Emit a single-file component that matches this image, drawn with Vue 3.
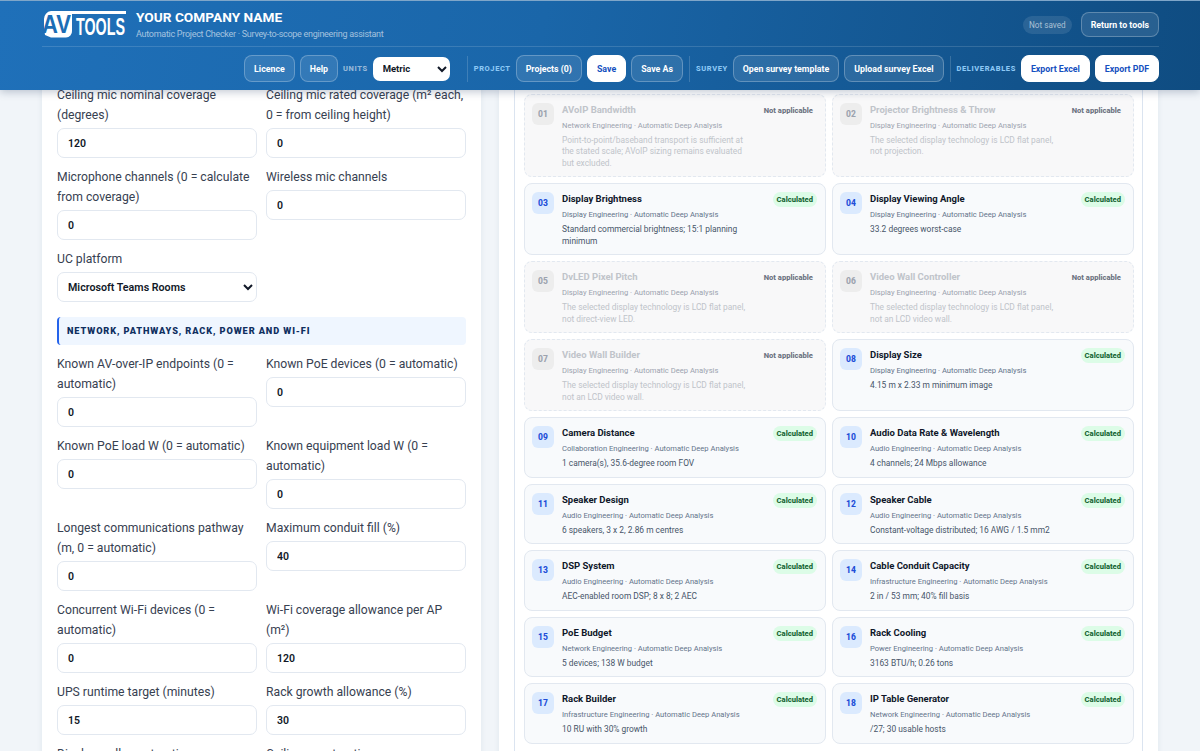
<script setup>
const rows = [
  [{ label: 'Ceiling mic nominal coverage (degrees)', value: '120' }, { label: 'Ceiling mic rated coverage (m² each, 0 = from ceiling height)', value: '0' }],
  [{ label: 'Microphone channels (0 = calculate from coverage)', value: '0' }, { label: 'Wireless mic channels', value: '0' }],
  [{ label: 'UC platform', select: 'Microsoft Teams Rooms' }],
  { section: 'Network, pathways, rack, power and Wi-Fi' },
  [{ label: 'Known AV-over-IP endpoints (0 = automatic)', value: '0' }, { label: 'Known PoE devices (0 = automatic)', value: '0' }],
  [{ label: 'Known PoE load W (0 = automatic)', value: '0' }, { label: 'Known equipment load W (0 = automatic)', value: '0' }],
  [{ label: 'Longest communications pathway (m, 0 = automatic)', value: '0' }, { label: 'Maximum conduit fill (%)', value: '40' }],
  [{ label: 'Concurrent Wi-Fi devices (0 = automatic)', value: '0' }, { label: 'Wi-Fi coverage allowance per AP (m²)', value: '120' }],
  [{ label: 'UPS runtime target (minutes)', value: '15' }, { label: 'Rack growth allowance (%)', value: '30' }],
  [{ label: 'Display wall construction', value: '' }, { label: 'Ceiling construction', value: '' }],
]
const A = 'Automatic Deep Analysis'
const cards = [
  ['01', 'AVoIP Bandwidth', 'Network Engineering', 'Point-to-point/baseband transport is sufficient at the stated scale; AVoIP sizing remains evaluated but excluded.', true],
  ['02', 'Projector Brightness & Throw', 'Display Engineering', 'The selected display technology is LCD flat panel, not projection.', true],
  ['03', 'Display Brightness', 'Display Engineering', 'Standard commercial brightness; 15:1 planning minimum'],
  ['04', 'Display Viewing Angle', 'Display Engineering', '33.2 degrees worst-case'],
  ['05', 'DvLED Pixel Pitch', 'Display Engineering', 'The selected display technology is LCD flat panel, not direct-view LED.', true],
  ['06', 'Video Wall Controller', 'Display Engineering', 'The selected display technology is LCD flat panel, not an LCD video wall.', true],
  ['07', 'Video Wall Builder', 'Display Engineering', 'The selected display technology is LCD flat panel, not an LCD video wall.', true],
  ['08', 'Display Size', 'Display Engineering', '4.15 m x 2.33 m minimum image'],
  ['09', 'Camera Distance', 'Collaboration Engineering', '1 camera(s), 35.6-degree room FOV'],
  ['10', 'Audio Data Rate & Wavelength', 'Audio Engineering', '4 channels; 24 Mbps allowance'],
  ['11', 'Speaker Design', 'Audio Engineering', '6 speakers, 3 x 2, 2.86 m centres'],
  ['12', 'Speaker Cable', 'Audio Engineering', 'Constant-voltage distributed; 16 AWG / 1.5 mm2'],
  ['13', 'DSP System', 'Audio Engineering', 'AEC-enabled room DSP; 8 x 8; 2 AEC'],
  ['14', 'Cable Conduit Capacity', 'Infrastructure Engineering', '2 in / 53 mm; 40% fill basis'],
  ['15', 'PoE Budget', 'Network Engineering', '5 devices; 138 W budget'],
  ['16', 'Rack Cooling', 'Power Engineering', '3163 BTU/h; 0.26 tons'],
  ['17', 'Rack Builder', 'Infrastructure Engineering', '10 RU with 30% growth'],
  ['18', 'IP Table Generator', 'Network Engineering', '/27; 30 usable hosts'],
].map(([n, title, dept, text, na]) => ({ n, title, sub: `${dept} · ${A}`, text, na }))
</script>

<template>
  <div class="page">
    <header class="head">
      <div class="top">
        <div class="brand">
          <svg class="logo" width="84" height="30" viewBox="0 0 84 30" aria-label="AV Tools">
            <path d="M9 2H30V22a6 6 0 0 1-6 6.500H9L3 26 2 19V10a8 8 0 0 1 7-8Z" fill="#fff" />
            <rect x="30" y="2" width="54" height="3" fill="#fff" />
            <text x="0" y="24" class="logo-av" textLength="29" lengthAdjust="spacingAndGlyphs">AV</text>
            <text x="34" y="26" class="logo-tools" textLength="49" lengthAdjust="spacingAndGlyphs">TOOLS</text>
          </svg>
          <div>
            <div class="company">YOUR COMPANY NAME</div>
            <div class="tagline">Automatic Project Checker · Survey-to-scope engineering assistant</div>
          </div>
        </div>
        <div class="status">
          <span class="saved">Not saved</span>
          <button class="btn back">Return to tools</button>
        </div>
      </div>
      <div class="bar">
        <button class="btn">Licence</button>
        <button class="btn">Help</button>
        <span class="tag muted">UNITS</span>
        <select class="units"><option>Metric</option></select>
        <i class="sep first"></i>
        <span class="tag">PROJECT</span>
        <button class="btn">Projects (0)</button>
        <button class="btn solid">Save</button>
        <button class="btn">Save As</button>
        <i class="sep"></i>
        <span class="tag">SURVEY</span>
        <button class="btn">Open survey template</button>
        <button class="btn">Upload survey Excel</button>
        <i class="sep"></i>
        <span class="tag">DELIVERABLES</span>
        <button class="btn solid">Export Excel</button>
        <button class="btn solid">Export PDF</button>
      </div>
    </header>
    <main class="main">
      <section class="panel form">
        <template v-for="(row, i) in rows" :key="i">
          <h3 v-if="row.section" class="section">{{ row.section }}</h3>
          <div v-else class="row">
            <label v-for="f in row" :key="f.label" class="field">
              <span class="lbl">{{ f.label }}</span>
              <select v-if="f.select" class="ctl pick"><option>{{ f.select }}</option></select>
              <input v-else class="ctl" :value="f.value" />
            </label>
          </div>
        </template>
      </section>
      <section class="panel results">
        <div class="grid">
          <article v-for="c in cards" :key="c.n" class="card" :class="{ na: c.na }">
            <span class="num">{{ c.n }}</span>
            <div class="body">
              <div class="title">{{ c.title }}</div>
              <div class="sub">{{ c.sub }}</div>
              <div class="text">{{ c.text }}</div>
            </div>
            <span class="pill">{{ c.na ? 'Not applicable' : 'Calculated' }}</span>
          </article>
        </div>
      </section>
    </main>
  </div>
</template>

<style>
html, body { margin: 0; overflow: hidden; background: #f1f5f9; }
</style>
<style scoped>
.page { height: 751px; overflow: hidden; display: flex; flex-direction: column; font-family: Roboto, sans-serif; color: #1e293b; background: #f1f5f9; }
.head { flex: none; height: 90px; box-sizing: border-box; padding: 0 41px 0 42px; background: linear-gradient(100deg, #1f70b9 0%, #1a66a9 45%, #0f4c81 100%); border-top: 1px solid #7fa6c9; box-shadow: 0 2px 8px rgba(15, 40, 80, .25); position: relative; z-index: 2; }
.top { height: 46px; box-sizing: border-box; padding-top: 1px; border-bottom: 1px solid rgba(255,255,255,.14); display: flex; justify-content: space-between; align-items: center; }
.brand { display: flex; align-items: center; gap: 10px; }
.logo { display: block; }
.logo-av { font: 700 25px "Liberation Sans", sans-serif; fill: #1c6db5; }
.logo-tools { font: 700 24px "Liberation Sans", sans-serif; fill: #fff; }
.company { font-size: 13.700px; font-weight: 700; color: #fff; line-height: 18px; }
.tagline { font-size: 9px; letter-spacing: -.28px; color: rgba(255,255,255,.6); line-height: 14px; margin-top: 1px; }
.status { display: flex; align-items: center; gap: 9px; margin-top: 1px; }
.saved { height: 18px; line-height: 18px; padding: 0 6px; border-radius: 9px; background: rgba(255,255,255,.1); color: rgba(255,255,255,.6); font-size: 8.200px; }
.btn { height: 27px; box-sizing: border-box; padding: 0 9px; border: 1px solid rgba(255,255,255,.25); border-radius: 8px; background: rgba(255,255,255,.1); color: #fff; font: 700 8.800px Roboto, sans-serif; white-space: nowrap; }
.btn.back { height: 25px; }
.btn.solid { background: #fff; color: #1550c0; border-color: #fff; }
.bar { height: 43px; display: flex; justify-content: flex-end; align-items: center; gap: 5px; }
.tag { font-size: 7.500px; font-weight: 800; letter-spacing: .6px; color: #8cc8f5; }
.tag.muted { color: rgba(255,255,255,.55); }
.units { width: 77px; height: 24px; box-sizing: border-box; border: 0; border-radius: 7px; background: #fff; padding-left: 6px; font: 700 9.500px Roboto, sans-serif; color: #111827; }
.sep { width: 1px; height: 26px; margin: 0 1px; background: rgba(255,255,255,.16); }
.sep.first { margin-left: 12px; }
.main { flex: 1; min-height: 0; display: flex; align-items: flex-start; gap: 18px; padding: 0 42px; }
.panel { background: #fff; box-shadow: 0 1px 6px rgba(30, 60, 110, .08); box-sizing: border-box; }
.form { width: 439px; flex: none; padding: 0 15px; display: flex; flex-direction: column; gap: 9px; margin-top: -5px; }
.row { display: grid; grid-template-columns: 200px 200px; gap: 9px; align-items: start; }
.field { display: block; }
.lbl { display: block; font-size: 12.200px; line-height: 20px; color: #374151; margin-bottom: 3px; }
.ctl { display: block; width: 100%; height: 30px; box-sizing: border-box; border: 1px solid #e2e8f0; border-radius: 7px; padding: 0 10px; background: #fff; font: 600 10.500px Roboto, sans-serif; color: #111827; }
.ctl.pick { padding-left: 6px; font-size: 10.700px; }
.section { margin: 6px 0 0; height: 28px; line-height: 28px; box-sizing: border-box; padding-left: 8px; border-left: 2px solid #2563eb; border-radius: 4px; background: #eff6ff; font-size: 9.200px; font-weight: 900; letter-spacing: .9px; text-transform: uppercase; color: #0f2f5f; }
.results { width: 659px; flex: none; padding: 0 15px; }
.grid { padding: 3.500px 8px 40px 9px; display: grid; grid-template-columns: 302px 302px; gap: 6px; border-left: 1px solid #dbe4f0; border-right: 1px solid #dbe4f0; }
.card { box-sizing: border-box; padding: 7px 8px 7px 7px; display: flex; gap: 8px; align-items: flex-start; border: 1px solid #e2e8f0; border-radius: 8px; background: #f8fafc; }
.num { flex: none; margin-top: 1px; width: 22px; height: 22px; border-radius: 6px; background: #dbeafe; color: #1d4ed8; font-size: 8.500px; font-weight: 800; line-height: 22px; text-align: center; }
.body { flex: 1; min-width: 0; }
.title { font-size: 9.500px; font-weight: 700; line-height: 15px; color: #0f172a; }
.sub { font-size: 7.600px; line-height: 15px; margin-top: 1px; color: #64748b; }
.text { font-size: 8.400px; line-height: 11.500px; color: #475569; margin-top: 2px; }
.pill { flex: none; margin-top: 1px; height: 15px; line-height: 15px; padding: 0 4px; border-radius: 8px; background: #dcfce7; color: #166534; font-size: 7.600px; font-weight: 800; }
.na { border-style: dashed; background: #f8f8f9; }
.na .num { background: #ededed; color: #9ca3af; }
.na .title, .na .text { color: #c0c4ca; }
.na .sub { color: #9ca3af; }
.na .pill { background: transparent; color: #6b7280; }
</style>
